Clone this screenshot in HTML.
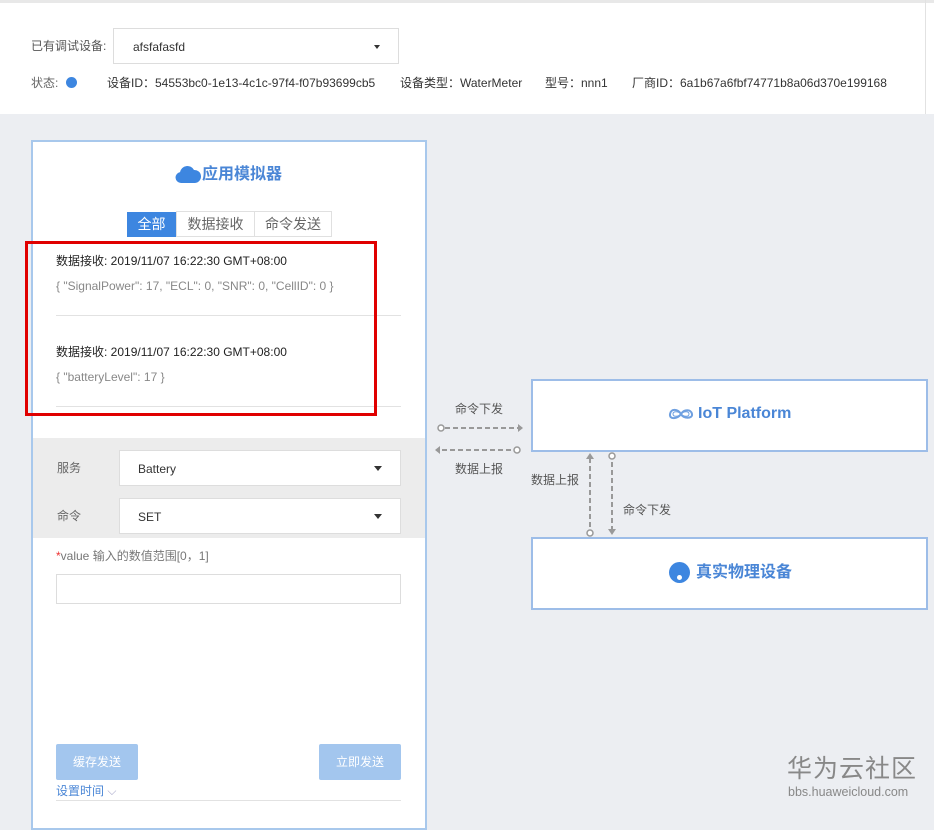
<!DOCTYPE html>
<html><head><meta charset="utf-8"><style>
*{margin:0;padding:0;box-sizing:border-box}
body{width:934px;height:817px;overflow:hidden;background:#eceef2;font-family:"Liberation Sans","Noto Sans CJK SC",sans-serif;font-size:12px;color:#333;position:relative}
.a{position:absolute;line-height:14px}
.sel{position:absolute;background:#fff;border:1px solid #ddd}
.tri{position:absolute;width:0;height:0;border-left:4px solid transparent;border-right:4px solid transparent;border-top:5px solid #333}
.g{color:#888}
.box{position:absolute;background:#fff;border:2px solid #9dbde8}
</style></head><body>
<div class="a" style="left:0;top:0;width:934px;height:114px;background:#fff;border-top:3px solid #e8e8e8"></div>
<div class="a" style="left:925px;top:0;width:1px;height:114px;background:#e2e2e2"></div>
<div class="a" style="left:31px;top:39px;color:#555">已有调试设备:</div>
<div class="sel" style="left:113px;top:28px;width:286px;height:36px"><span class="a" style="left:19px;top:11px;color:#333">afsfafasfd</span><div class="tri" style="left:260px;top:16px;border-left-width:3px;border-right-width:3px;border-top-width:4px"></div></div>
<div class="a" style="left:31px;top:76px;color:#666">状态:</div>
<div class="a" style="left:66px;top:77px;width:11px;height:11px;border-radius:50%;background:#3d86e0"></div>
<div class="a" style="left:107px;top:76px;color:#333;white-space:nowrap">设备ID：54553bc0-1e13-4c1c-97f4-f07b93699cb5</div>
<div class="a" style="left:400px;top:76px;white-space:nowrap">设备类型：WaterMeter</div>
<div class="a" style="left:545px;top:76px;white-space:nowrap">型号：nnn1</div>
<div class="a" style="left:632px;top:76px;white-space:nowrap">厂商ID：6a1b67a6fbf74771b8a06d370e199168</div>

<div class="a" style="left:31px;top:140px;width:396px;height:690px;background:#fff;border:2px solid #a8c8ec"></div>
<svg class="a" style="left:175px;top:164px" width="26" height="20" viewBox="0 0 26 20"><path d="M6 19a5.5 5.5 0 0 1-1-10.9A7.5 7.5 0 0 1 19 6a6.5 6.5 0 0 1 1 13z" fill="#3d86e0"/></svg>
<div class="a" style="left:202px;top:166px;font-size:16px;line-height:18px;font-weight:bold;color:#4a86d6">应用模拟器</div>
<div class="a" style="left:127px;top:212px;width:49px;height:25px;background:#3d86e0;color:#fff;font-size:14px;text-align:center;line-height:25px">全部</div>
<div class="a" style="left:176px;top:211px;width:79px;height:26px;border:1px solid #e0e0e0;color:#666;font-size:14px;text-align:center;line-height:24px">数据接收</div>
<div class="a" style="left:254px;top:211px;width:78px;height:26px;border:1px solid #e0e0e0;color:#666;font-size:14px;text-align:center;line-height:24px">命令发送</div>
<div class="a" style="left:56px;top:254px;color:#222">数据接收: 2019/11/07 16:22:30 GMT+08:00</div>
<div class="a g" style="left:56px;top:279px">{ "SignalPower": 17, "ECL": 0, "SNR": 0, "CellID": 0 }</div>
<div class="a" style="left:56px;top:315px;width:345px;height:1px;background:#e2e2e2"></div>
<div class="a" style="left:56px;top:345px;color:#222">数据接收: 2019/11/07 16:22:30 GMT+08:00</div>
<div class="a g" style="left:56px;top:370px">{ "batteryLevel": 17 }</div>
<div class="a" style="left:56px;top:406px;width:345px;height:1px;background:#e2e2e2"></div>
<div class="a" style="left:25px;top:241px;width:352px;height:175px;border:3px solid #e00000"></div>

<div class="a" style="left:33px;top:438px;width:392px;height:100px;background:#ececec"></div>
<div class="a" style="left:57px;top:461px;color:#666">服务</div>
<div class="sel" style="left:119px;top:450px;width:282px;height:36px"><span class="a" style="left:18px;top:11px">Battery</span><div class="tri" style="left:254px;top:15px"></div></div>
<div class="a" style="left:57px;top:509px;color:#666">命令</div>
<div class="sel" style="left:119px;top:498px;width:282px;height:36px"><span class="a" style="left:18px;top:11px">SET</span><div class="tri" style="left:254px;top:15px"></div></div>
<div class="a" style="left:56px;top:549px;color:#777"><span style="color:#e33">*</span>value 输入的数值范围[0，1]</div>
<div class="sel" style="left:56px;top:574px;width:345px;height:30px"></div>
<div class="a" style="left:56px;top:744px;width:82px;height:36px;background:#a3c6ee;color:#fff;text-align:center;line-height:36px;border-radius:2px">缓存发送</div>
<div class="a" style="left:319px;top:744px;width:82px;height:36px;background:#a3c6ee;color:#fff;text-align:center;line-height:36px;border-radius:2px">立即发送</div>
<div class="a" style="left:56px;top:784px;color:#4a86d6">设置时间 <span style="color:#aac">⌵</span></div>
<div class="a" style="left:56px;top:800px;width:345px;height:1px;background:#e2e2e2"></div>

<div class="box" style="left:531px;top:379px;width:397px;height:73px"></div>
<svg class="a" style="left:668px;top:407px" width="26" height="14" viewBox="0 0 26 14"><path d="M13 7C10 2 3 1 2 7s8 5 11 0 10-5 11 0-9 5-11 0" fill="none" stroke="#6fa0e0" stroke-width="2"/><path d="M13 7C10 4 5 4 5 7s5 3 8 0 8-3 8 0-5 3-8 0" fill="none" stroke="#6fa0e0" stroke-width="1"/></svg>
<div class="a" style="left:698px;top:405px;font-size:16px;line-height:18px;font-weight:bold;color:#4a86d6">IoT Platform</div>
<div class="box" style="left:531px;top:537px;width:397px;height:73px"></div>
<div class="a" style="left:669px;top:562px;width:21px;height:21px;border-radius:50%;background:#3d86e0"></div>
<div class="a" style="left:677px;top:575px;width:5px;height:5px;border-radius:50%;background:#fff"></div>
<div class="a" style="left:696px;top:564px;font-size:16px;line-height:18px;font-weight:bold;color:#4a86d6">真实物理设备</div>

<svg class="a" style="left:430px;top:370px" width="200" height="170">
<g stroke="#999" stroke-width="2" stroke-dasharray="5,3" fill="none">
<line x1="15" y1="58" x2="90" y2="58"/><line x1="12" y1="80" x2="82" y2="80"/>
<line x1="160" y1="88" x2="160" y2="160"/><line x1="182" y1="92" x2="182" y2="160"/>
</g>
<g fill="#fff" stroke="#999" stroke-width="1.5"><circle cx="11" cy="58" r="3"/><circle cx="87" cy="80" r="3"/><circle cx="182" cy="86" r="3"/><circle cx="160" cy="163" r="3"/></g>
<g fill="#999"><path d="M88 54l5 4-5 4z"/><path d="M10 76l-5 4 5 4z"/><path d="M156 89l4-6 4 6z"/><path d="M178 159l4 6 4-6z"/></g>
</svg>
<div class="a" style="left:455px;top:402px;color:#555">命令下发</div>
<div class="a" style="left:455px;top:462px;color:#555">数据上报</div>
<div class="a" style="left:531px;top:473px;color:#555">数据上报</div>
<div class="a" style="left:623px;top:503px;color:#555">命令下发</div>

<div class="a" style="left:787px;top:755px;font-size:25px;line-height:28px;color:#888;letter-spacing:1px">华为云社区</div>
<div class="a" style="left:788px;top:785px;font-size:12.5px;color:#888">bbs.huaweicloud.com</div>
</body></html>
